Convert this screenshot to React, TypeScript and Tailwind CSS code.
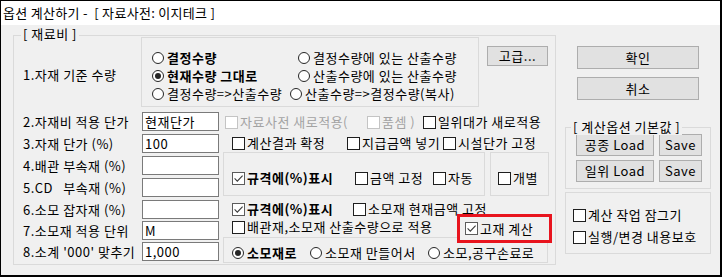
import React from "react";

type CheckProps = {
    label: string;
    w?: string;
    checked?: boolean;
    disabled?: boolean;
    bold?: boolean;
};

function CheckBox({ checked, disabled }: { checked?: boolean; disabled?: boolean }) {
    const border = disabled ? "border-[#c4c4c4]" : checked ? "border-[#5c5c5c]" : "border-[#1e1e1e]";
    return (
        <span className={`w-[13px] h-[13px] border ${border} bg-white shrink-0 flex items-center justify-center`}>
            {checked && (
                <svg width="11" height="11" viewBox="0 0 11 11">
                    <path d="M1.6 5.4 L4.3 8.1 L9.6 2.6" fill="none" stroke="#3a3a3a" strokeWidth="1.1" />
                </svg>
            )}
        </span>
    );
}

function CheckItem({ label, w = "", checked, disabled, bold }: CheckProps) {
    return (
        <div className={`flex items-center h-[18px] shrink-0 ${w}`}>
            <CheckBox checked={checked} disabled={disabled} />
            <span
                className={`ml-[2px] whitespace-pre ${disabled ? "text-[#a3a3a3]" : "text-black"} ${bold ? "font-bold" : ""}`}
            >
                {label}
            </span>
        </div>
    );
}

function Radio({ label, w = "", checked, bold }: CheckProps) {
    return (
        <div className={`flex items-center h-[18px] shrink-0 ${w}`}>
            <span className="w-[12px] h-[12px] rounded-full border border-[#262626] bg-white shrink-0 flex items-center justify-center">
                {checked && <span className="w-[6px] h-[6px] rounded-full bg-[#262626]" />}
            </span>
            <span className={`ml-[3px] whitespace-pre ${bold ? "font-bold" : ""}`}>{label}</span>
        </div>
    );
}

function Btn({ label, className = "" }: { label: string; className?: string }) {
    return (
        <div
            className={`flex items-center justify-center bg-[#e1e1e1] border border-[#adadad] shrink-0 ${className}`}
        >
            {label}
        </div>
    );
}

const FIELDS: { label: string; value: string; mt: string }[] = [
    { label: "2.자재비 적용 단가", value: "현재단가", mt: "mt-[5px]" },
    { label: "3.자재 단가 (%)", value: "100", mt: "mt-[3px]" },
    { label: "4.배관 부속재 (%)", value: "", mt: "mt-[3px]" },
    { label: "5.CD   부속재 (%)", value: "", mt: "mt-[3px]" },
    { label: "6.소모 잡자재 (%)", value: "", mt: "mt-[3px]" },
    { label: "7.소모재 적용 단위", value: "M", mt: "mt-[2px]" },
    { label: "8.소계 '000' 맞추기", value: "1,000", mt: "mt-[2px]" },
];

export default function App() {
    return (
        <div className="w-[722px] h-[277px] border-l border-t border-r-2 border-b-2 border-black flex flex-col font-['Noto_Sans_CJK_KR',sans-serif] text-[13px] leading-[18px] text-black">
            {/* Title */}
            <div className="h-[24px] bg-white flex items-center pl-[2px] shrink-0 whitespace-pre tracking-[0.3px]">
                옵션 계산하기 -  [ 자료사전: 이지테크 ]
            </div>

            {/* Body */}
            <div className="flex-1 bg-[#f0f0f0] flex items-start tracking-[0.5px]">
                {/* 재료비 group */}
                <div className="relative ml-[12px] mt-[10px] w-[543px] h-[230px] border border-[#dadada] shrink-0">
                    <span className="absolute left-[7px] -top-[10px] px-[2px] bg-[#f0f0f0] leading-[16px] whitespace-pre">
                        [ 재료비 ]
                    </span>

                    {/* Row 1 */}
                    <div className="flex items-start mt-[1px] h-[70px]">
                        <div className="w-[127px] pl-[9px] pt-[29px] shrink-0 whitespace-pre">1.자재 기준 수량</div>
                        <div className="w-[338px] h-[70px] border border-[#dadada] pl-[10px] pt-[11px] shrink-0">
                            <div className="flex">
                                <Radio label="결정수량" w="w-[146px]" bold />
                                <Radio label="결정수량에 있는 산출수량" />
                            </div>
                            <div className="flex">
                                <Radio label="현재수량 그대로" w="w-[146px]" checked bold />
                                <Radio label="산출수량에 있는 산출수량" />
                            </div>
                            <div className="flex">
                                <Radio label="결정수량=>산출수량" w="w-[138px]" />
                                <Radio label="산출수량=>결정수량(복사)" />
                            </div>
                        </div>
                        <Btn label="고급..." className="ml-[8px] mt-[9px] w-[61px] h-[20px]" />
                    </div>

                    {/* Lower area */}
                    <div className="flex items-start">
                        {/* Fields */}
                        <div className="w-[205px] pl-[9px] flex flex-col shrink-0">
                            {FIELDS.map((f) => (
                                <div key={f.label} className={`flex items-center h-[19px] ${f.mt}`}>
                                    <span className="w-[119px] whitespace-pre shrink-0">{f.label}</span>
                                    <div className="w-[77px] h-[19px] border border-[#7a7a7a] bg-white pl-[2px] flex items-center">
                                        {f.value}
                                    </div>
                                </div>
                            ))}
                        </div>

                        {/* Options */}
                        <div className="ml-[4px] w-[326px] flex flex-col shrink-0">
                            <div className="flex mt-[6px] pl-[2px]">
                                <CheckItem label="자료사전 새로적용(" w="w-[142px]" disabled />
                                <CheckItem label="품셈 )" w="w-[56px]" disabled />
                                <CheckItem label="일위대가 새로적용" />
                            </div>
                            <div className="flex mt-[3px] pl-[9px]">
                                <CheckItem label="계산결과 확정" w="w-[115px]" />
                                <CheckItem label="지급금액 넣기" w="w-[96px]" />
                                <CheckItem label="시설단가 고정" />
                            </div>
                            <div className="flex">
                                <div className="w-[262px] h-[44px] border border-[#dadada] pl-[8px] pt-[16px] flex items-start shrink-0">
                                    <CheckItem label="규격에(%)표시" w="w-[123px]" checked bold />
                                    <CheckItem label="금액 고정" w="w-[78px]" />
                                    <CheckItem label="자동" />
                                </div>
                                <div className="ml-[5px] w-[59px] h-[44px] border border-[#dadada] pl-[7px] pt-[16px] shrink-0">
                                    <CheckItem label="개별" />
                                </div>
                            </div>
                            <div className="flex mt-[4px] pl-[9px]">
                                <CheckItem label="규격에(%)표시" w="w-[121px]" checked bold />
                                <CheckItem label="소모재 현재금액 고정" />
                            </div>
                            <div className="flex items-start pl-[9px]">
                                <CheckItem label="배관재,소모재 산출수량으로 적용" w="w-[225px]" />
                                <div className="relative z-10 -mt-[4px] -mb-[7px] w-[95px] h-[29px] border-[3px] border-[#e8141e] bg-[#f0f0f0] pl-[5px] flex items-center shrink-0">
                                    <CheckItem label="고재 계산" checked />
                                </div>
                            </div>
                            <div className="mt-[1px] w-[325px] h-[26px] border border-[#dadada] pl-[8px] pt-[6px] flex items-start">
                                <Radio label="소모재로" w="w-[78px]" checked bold />
                                <Radio label="소모재 만들어서" w="w-[118px]" />
                                <Radio label="소모,공구손료로" />
                            </div>
                        </div>
                    </div>
                </div>

                {/* Right column */}
                <div className="ml-[9px] w-[146px] flex flex-col shrink-0">
                    <Btn label="확인" className="ml-[12px] mt-[21px] w-[122px] h-[23px]" />
                    <Btn label="취소" className="ml-[12px] mt-[8px] w-[122px] h-[23px]" />

                    <div className="relative mt-[27px] w-[146px] h-[62px] border border-[#dadada] pl-[10px] pt-[6px]">
                        <span className="absolute left-[5px] -top-[9px] px-[2px] bg-[#f0f0f0] leading-[16px] whitespace-pre">
                            [ 계산옵션 기본값 ]
                        </span>
                        <div className="flex gap-[5px]">
                            <Btn label="공종 Load" className="w-[78px] h-[22px]" />
                            <Btn label="Save" className="w-[43px] h-[22px]" />
                        </div>
                        <div className="flex gap-[5px] mt-[4px]">
                            <Btn label="일위 Load" className="w-[78px] h-[22px]" />
                            <Btn label="Save" className="w-[43px] h-[22px]" />
                        </div>
                    </div>

                    <div className="mt-[3px] w-[146px] h-[62px] border border-[#dadada] pl-[7px] pt-[13px] flex flex-col gap-[4px]">
                        <CheckItem label="계산 작업 잠그기" />
                        <CheckItem label="실행/변경 내용보호" />
                    </div>
                </div>
            </div>
        </div>
    );
}
